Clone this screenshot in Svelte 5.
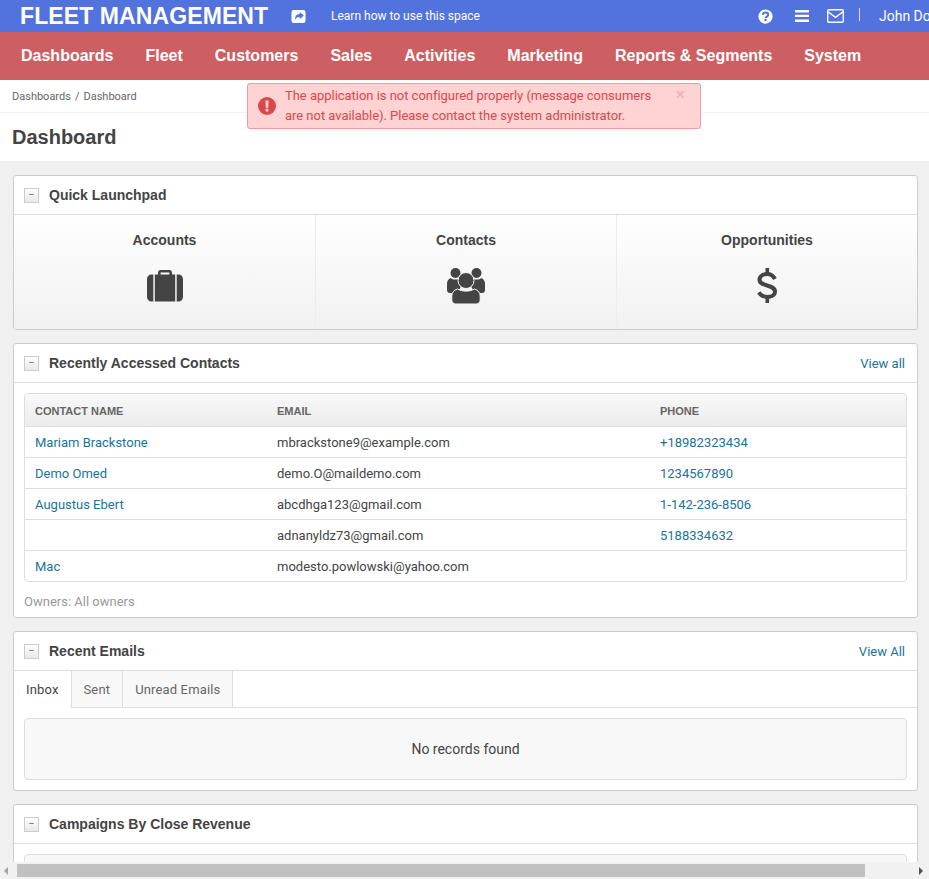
<script lang="ts">
  const navItems = ['Dashboards', 'Fleet', 'Customers', 'Sales', 'Activities', 'Marketing', 'Reports & Segments', 'System'];

  const contacts = [
    { name: 'Mariam Brackstone', email: 'mbrackstone9@example.com', phone: '+18982323434' },
    { name: 'Demo Omed', email: 'demo.O@maildemo.com', phone: '1234567890' },
    { name: 'Augustus Ebert', email: 'abcdhga123@gmail.com', phone: '1-142-236-8506' },
    { name: '', email: 'adnanyldz73@gmail.com', phone: '5188334632' },
    { name: 'Mac', email: 'modesto.powlowski@yahoo.com', phone: '' }
  ];

  const tabs = ['Inbox', 'Sent', 'Unread Emails'];
</script>

<div class="window">
  <div class="viewport">
    <div class="page">
      <header class="topbar">
        <span class="logo">FLEET MANAGEMENT</span>
        <svg class="share" viewBox="0 0 16 16" aria-hidden="true">
          <path fill="#fff" d="M3 1h10a2.500 2.500 0 0 1 2.500 2.500v9A2.500 2.500 0 0 1 13 15H3a2.500 2.500 0 0 1-2.500-2.500v-9A2.500 2.500 0 0 1 3 1z" />
          <path fill="#5272dd" d="M9.300 3.200 13.700 7 9.300 10.800V8.600C6.800 8.500 5.300 9.300 4.600 11.800 3.900 8 5.800 5.600 9.300 5.400z" />
        </svg>
        <span class="learn">Learn how to use this space</span>
        <div class="top-actions">
          <svg class="help" viewBox="0 0 16 16" aria-hidden="true">
            <circle cx="8" cy="8" r="7.600" fill="#fff" />
            <path fill="none" stroke="#5272dd" stroke-width="2.200" d="M5.100 6.300C5.200 4.600 6.500 3.700 8 3.700c1.700 0 2.900 1 2.900 2.400 0 2-2.900 1.900-2.900 3.700" />
            <rect x="6.900" y="10.700" width="2.200" height="2.200" fill="#5272dd" />
          </svg>
          <svg class="bars" viewBox="0 0 14 12" aria-hidden="true">
            <path fill="#fff" d="M0 0h14v2.400H0zM0 4.700h14v2.400H0zM0 9.400h14V12H0z" />
          </svg>
          <svg class="mail" viewBox="0 0 17 14" aria-hidden="true">
            <rect x=".7" y=".7" width="15.600" height="12.600" rx="1.300" fill="none" stroke="#fff" stroke-width="1.400" />
            <path fill="none" stroke="#fff" stroke-width="1.400" d="M1 2.800l7.500 5.500 7.500-5.500" />
          </svg>
          <span class="divider"></span>
          <span class="user">John Doe</span>
        </div>
      </header>

      <nav class="mainnav">
        {#each navItems as item}
          <span class="nav-item">{item}</span>
        {/each}
      </nav>

      <div class="breadcrumbs">
        <span>Dashboards</span><span class="sep">/</span><span>Dashboard</span>
      </div>

      <div class="title-row">
        <h1>Dashboard</h1>
      </div>

      <main class="content">
        <section class="panel">
          <div class="panel-head">
            <span class="collapse">−</span>
            <h2>Quick Launchpad</h2>
          </div>
          <div class="launchpad">
            <div class="launch-item">
              <span class="launch-label">Accounts</span>
              <svg class="launch-icon" viewBox="-1 -2 38 36" aria-hidden="true">
                <path fill="#444" d="M11 5V2.500C11 1.100 12.100 0 13.500 0h9C23.900 0 25 1.100 25 2.500V5h-2.600V2.600H13.600V5z" />
                <path fill="#444" d="M4.500 4.500h1.800v27H4.500C2 31.500 0 29.500 0 27V9c0-2.500 2-4.500 4.500-4.500zM7.800 4.500h20.400v27H7.800zM29.700 4.500h1.800C34 4.500 36 6.500 36 9v18c0 2.500-2 4.500-4.500 4.500h-1.800z" />
              </svg>
            </div>
            <div class="launch-item">
              <span class="launch-label">Contacts</span>
              <svg class="launch-icon" viewBox="0 0 38 36" aria-hidden="true">
                <circle cx="8.500" cy="5" r="5" fill="#444" />
                <circle cx="29.500" cy="5" r="5" fill="#444" />
                <path fill="#444" d="M3.500 10c1.400 1 3 1.500 5 1.500s3.600-.5 5-1.500l3 3-6 12H3c-1.700 0-3-1.200-3-3v-6c0-2.600 1.200-5 3.500-6z" />
                <path fill="#444" d="M34.500 10c-1.400 1-3 1.500-5 1.500s-3.600-.5-5-1.500l-3 3 6 12H35c1.700 0 3-1.200 3-3v-6c0-2.600-1.200-5-3.500-6z" />
                <circle cx="19" cy="12.500" r="8" fill="#444" stroke="#f9f9f9" stroke-width="1" />
                <path fill="#444" stroke="#f9f9f9" stroke-width="1" d="M10.500 21c2.300 1.400 5.300 2.100 8.500 2.100s6.200-.7 8.500-2.100c3.500 1 5.700 3.600 5.700 7v4c0 2.200-1.700 4-4 4H8.800c-2.300 0-4-1.800-4-4v-4c0-3.400 2.200-6 5.700-7z" />
              </svg>
            </div>
            <div class="launch-item">
              <span class="launch-label">Opportunities</span>
              <svg class="launch-icon" viewBox="0 0 38 36" aria-hidden="true">
                <path fill="none" stroke="#444" stroke-width="4" d="M27 11C25 7.600 22.400 6 19.500 6c-4.600 0-8 2.300-8 5.700 0 7.300 15.500 4.300 15.500 11.800 0 3.400-3.400 5.500-7.800 5.500-3.400 0-6.300-1.500-8.400-4.700" />
                <path fill="#444" d="M17.500 0h3.600v6h-3.600zM17.500 29h3.600v6h-3.600z" />
              </svg>
            </div>
          </div>
        </section>

        <section class="panel">
          <div class="panel-head">
            <span class="collapse">−</span>
            <h2>Recently Accessed Contacts</h2>
            <a class="view-all" href="#contacts">View all</a>
          </div>
          <div class="panel-body">
            <div class="grid-wrap">
              <table>
                <thead>
                  <tr>
                    <th class="col-name">Contact name</th>
                    <th class="col-email">Email</th>
                    <th>Phone</th>
                  </tr>
                </thead>
                <tbody>
                  {#each contacts as contact}
                    <tr>
                      <td class="link">{contact.name}</td>
                      <td>{contact.email}</td>
                      <td class="link">{contact.phone}</td>
                    </tr>
                  {/each}
                </tbody>
              </table>
            </div>
            <p class="owners">Owners: All owners</p>
          </div>
        </section>

        <section class="panel">
          <div class="panel-head">
            <span class="collapse">−</span>
            <h2>Recent Emails</h2>
            <a class="view-all" href="#emails">View All</a>
          </div>
          <div class="tabs">
            {#each tabs as tab, i}
              <span class="tab" class:active={i === 0}>{tab}</span>
            {/each}
          </div>
          <div class="tab-body">
            <div class="empty">No records found</div>
          </div>
        </section>

        <section class="panel">
          <div class="panel-head">
            <span class="collapse">−</span>
            <h2>Campaigns By Close Revenue</h2>
          </div>
          <div class="panel-body">
            <div class="grid-wrap stub"></div>
          </div>
        </section>
      </main>
    </div>

    <div class="alert">
      <svg class="alert-icon" viewBox="0 0 18 18" aria-hidden="true">
        <circle cx="9" cy="9" r="9" fill="#d9484c" />
        <path fill="#ffd2d3" d="M7.400 3.500h3.200l-.4 7.200H7.800zM7.600 11.800h2.800v2.700H7.600z" />
      </svg>
      <p>The application is not configured properly (message consumers are not available). Please contact the system administrator.</p>
      <span class="alert-close">×</span>
    </div>
  </div>

  <div class="scrollbar">
    <span class="arrow left"></span>
    <span class="thumb"></span>
    <span class="arrow right"></span>
  </div>
</div>

<style>
  :global(body) {
    margin: 0;
    background: #f0f0f0;
    overflow: hidden;
  }

  .window {
    width: 929px;
    height: 879px;
    display: flex;
    flex-direction: column;
    overflow: hidden;
    font-family: Roboto, "Liberation Sans", sans-serif;
    font-size: 14px;
    color: #444;
  }

  .viewport {
    position: relative;
    flex: 1;
    min-height: 0;
    overflow: hidden;
  }

  .page {
    width: 929px;
  }

  .topbar {
    height: 32px;
    background: #5272dd;
    color: #fff;
    display: flex;
    align-items: center;
    padding-left: 20px;
    white-space: nowrap;
  }

  .logo {
    font-family: "Liberation Sans", sans-serif;
    font-size: 23px;
    font-weight: 700;
    letter-spacing: .1px;
    width: 271px;
  }

  .share {
    width: 15px;
    height: 15px;
    margin-right: 25px;
  }

  .learn {
    font-size: 12px;
  }

  .top-actions {
    margin-left: auto;
    display: flex;
    align-items: center;
    width: 171px;
    flex: none;
    overflow: hidden;
  }

  .top-actions > * {
    flex: none;
  }

  .help {
    width: 15px;
    height: 15px;
    margin-right: 22px;
  }

  .bars {
    width: 14px;
    height: 12px;
    margin-right: 18px;
  }

  .mail {
    width: 17px;
    height: 14px;
    margin-right: 15px;
  }

  .divider {
    width: 1px;
    height: 13px;
    background: #dfe5f9;
    margin: -3px 19px 0 0;
  }

  .user {
    font-size: 14px;
  }

  .mainnav {
    height: 48px;
    background: #cd5f63;
    display: flex;
    align-items: center;
    padding-left: 21px;
    gap: 32px;
    color: #fff;
    font-family: "Liberation Sans", sans-serif;
    font-size: 16px;
    font-weight: 700;
    white-space: nowrap;
  }

  .breadcrumbs {
    height: 32px;
    background: #fff;
    border-bottom: 1px solid #f0f0f0;
    display: flex;
    align-items: center;
    padding-left: 12px;
    font-size: 11px;
    color: #666;
  }

  .sep {
    margin: 0 4px;
  }

  .title-row {
    height: 48px;
    background: #fff;
    display: flex;
    align-items: center;
    padding-left: 12px;
  }

  h1 {
    margin: 0;
    font-family: "Liberation Sans", sans-serif;
    font-size: 20px;
    font-weight: 700;
    color: #444;
  }

  .content {
    padding: 14px 11px 0 13px;
    display: flex;
    flex-direction: column;
    gap: 13px;
  }

  .panel {
    background: #fff;
    border: 1px solid #ccc;
    border-radius: 3px;
  }

  .panel-head {
    height: 38px;
    display: flex;
    align-items: center;
    padding: 0 12px 0 10px;
    border-bottom: 1px solid #ddd;
  }

  .collapse {
    width: 15px;
    height: 15px;
    box-sizing: border-box;
    border: 1px solid #ccc;
    background: linear-gradient(#fff, #e8e8e8);
    color: #666;
    font-size: 11px;
    line-height: 12px;
    text-align: center;
    margin-right: 10px;
  }

  h2 {
    margin: 0;
    font-family: "Liberation Sans", sans-serif;
    font-size: 14px;
    font-weight: 700;
    color: #444;
  }

  .view-all {
    margin-left: auto;
    font-size: 13px;
    color: #1c7397;
    text-decoration: none;
  }

  .launchpad {
    display: grid;
    grid-template-columns: repeat(3, 1fr);
    height: 114px;
    background: linear-gradient(#fff, #f1f1f1);
    border-radius: 0 0 3px 3px;
  }

  .launch-item {
    display: flex;
    flex-direction: column;
    align-items: center;
    padding-top: 17px;
    border-left: 1px solid #ececec;
  }

  .launch-item:first-child {
    border-left: 0;
  }

  .launch-label {
    font-family: "Liberation Sans", sans-serif;
    font-size: 14px;
    font-weight: 700;
    color: #444;
    margin-bottom: 20px;
  }

  .launch-icon {
    width: 38px;
    height: 36px;
  }

  .panel-body {
    padding: 10px 10px 0;
  }

  .grid-wrap {
    border: 1px solid #ddd;
    border-radius: 4px;
    overflow: hidden;
  }

  table {
    width: 100%;
    border-collapse: collapse;
    table-layout: fixed;
  }

  th {
    height: 31px;
    padding: 1px 10px 0;
    text-align: left;
    font-family: "Liberation Sans", sans-serif;
    font-size: 11px;
    font-weight: 700;
    text-transform: uppercase;
    color: #666;
    background: linear-gradient(#f8f8f8, #ececec);
    border-bottom: 1px solid #ddd;
  }

  .col-name {
    width: 222px;
  }

  .col-email {
    width: 363px;
  }

  td {
    height: 30px;
    padding: 0 10px;
    font-size: 13px;
    color: #444;
    border-top: 1px solid #ddd;
  }

  tbody tr:first-child td {
    border-top: 0;
  }

  td.link {
    color: #1c7397;
  }

  .owners {
    margin: 12px 0 7px;
    font-size: 13px;
    line-height: 16px;
    color: #999;
  }

  .tabs {
    display: flex;
    height: 36px;
    border-bottom: 1px solid #ddd;
  }

  .tab {
    display: flex;
    align-items: center;
    padding: 0 12px;
    font-size: 13px;
    letter-spacing: .15px;
    color: #666;
    background: #f8f8f8;
    border-right: 1px solid #ddd;
  }

  .tab.active {
    background: #fff;
    color: #444;
    margin-bottom: -1px;
  }

  .tab-body {
    padding: 10px 10px 10px;
  }

  .empty {
    height: 60px;
    border: 1px solid #ddd;
    border-radius: 4px;
    background: #f8f8f8;
    display: flex;
    align-items: center;
    justify-content: center;
    font-size: 14px;
    color: #444;
  }

  .stub {
    height: 60px;
    background: #f8f8f8;
  }

  .alert {
    position: absolute;
    left: 247px;
    top: 83px;
    width: 454px;
    height: 46px;
    box-sizing: border-box;
    background: #ffd2d3;
    border: 1px solid #f59a9c;
    border-radius: 3px;
    color: #d9484c;
    display: flex;
    font-size: 13px;
    letter-spacing: -.03px;
    line-height: 20px;
  }

  .alert-icon {
    width: 18px;
    height: 18px;
    margin: 13px 0 0 10px;
    flex: none;
  }

  .alert p {
    margin: 2px 0 0 9px;
    width: 375px;
  }

  .alert-close {
    font-size: 16px;
    line-height: 22px;
    font-weight: 700;
    color: #eeb5b6;
    margin-left: 16px;
  }

  .scrollbar {
    height: 17px;
    flex: none;
    background: #f1f1f1;
    display: flex;
    align-items: center;
  }

  .thumb {
    width: 848px;
    height: 13px;
    background: #c1c1c1;
  }

  .arrow {
    width: 0;
    height: 0;
    border-top: 4px solid transparent;
    border-bottom: 4px solid transparent;
  }

  .arrow.left {
    border-right: 4px solid #a3a3a3;
    margin: 0 9px 0 4px;
  }

  .arrow.right {
    border-left: 4px solid #505050;
    margin-left: 54px;
  }
</style>
